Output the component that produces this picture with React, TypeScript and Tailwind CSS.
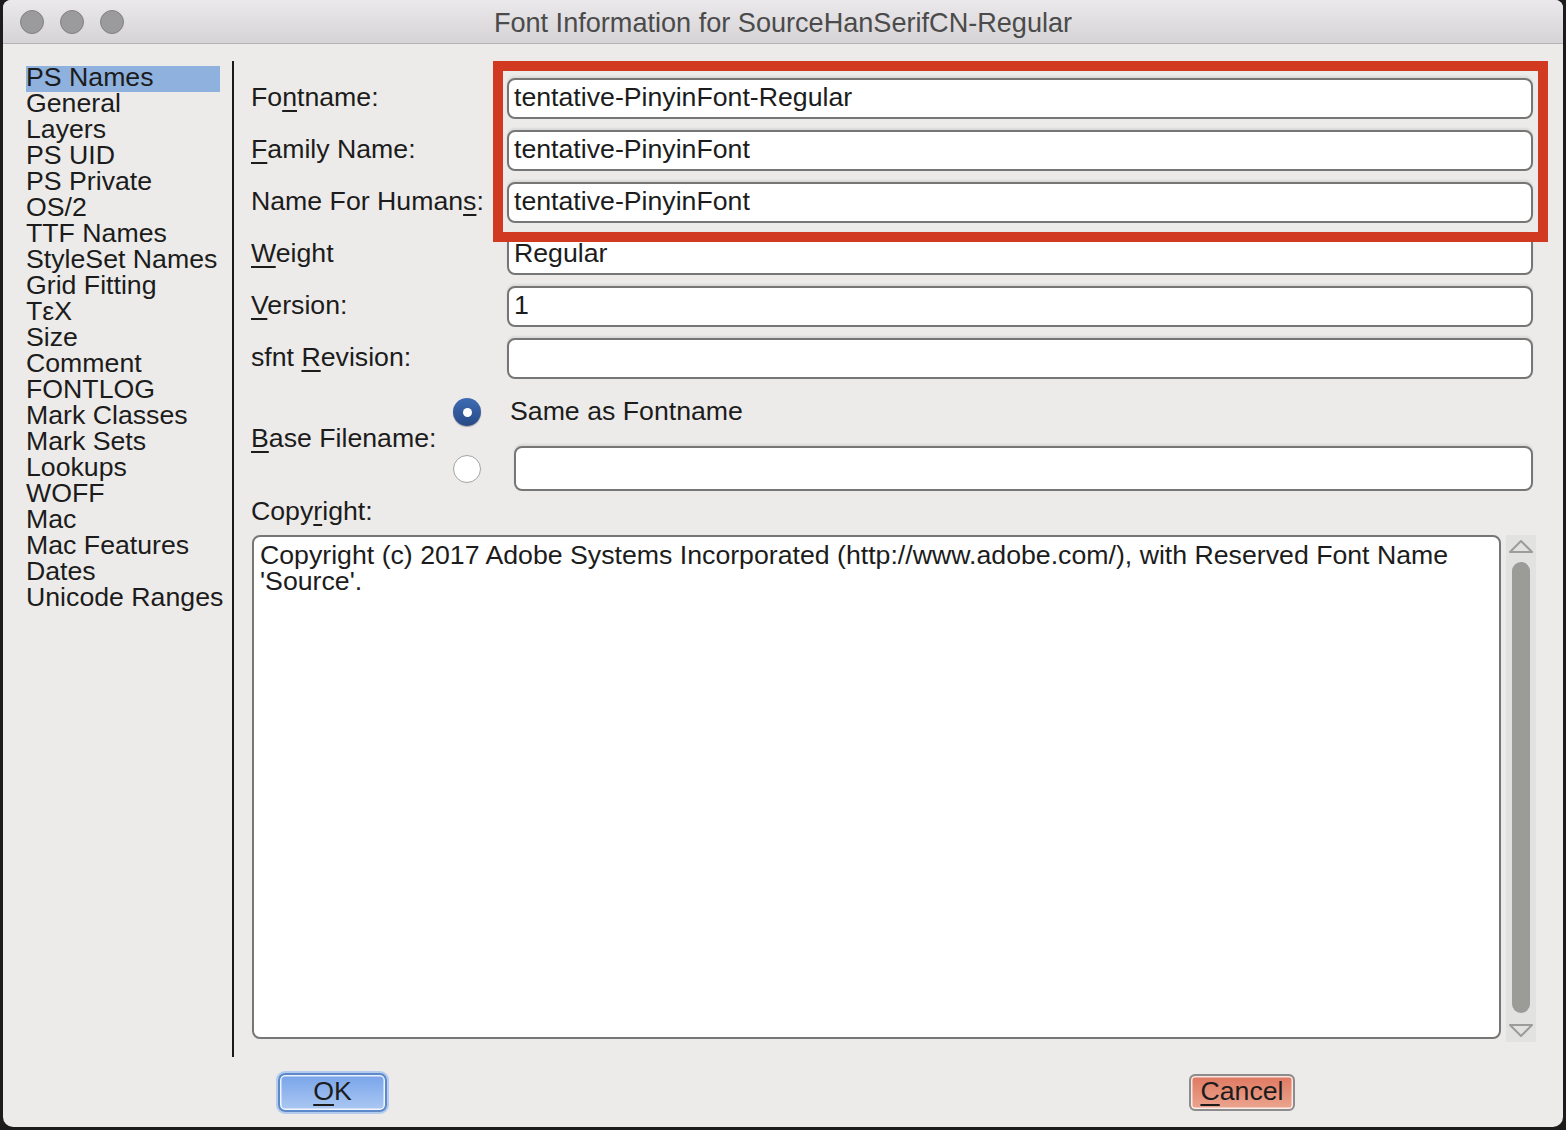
import React from 'react'

type Mnemonic = [string, string, string]

const sections = [
  'PS Names',
  'General',
  'Layers',
  'PS UID',
  'PS Private',
  'OS/2',
  'TTF Names',
  'StyleSet Names',
  'Grid Fitting',
  'TεX',
  'Size',
  'Comment',
  'FONTLOG',
  'Mark Classes',
  'Mark Sets',
  'Lookups',
  'WOFF',
  'Mac',
  'Mac Features',
  'Dates',
  'Unicode Ranges',
]

const fields: { label: Mnemonic; value: string }[] = [
  { label: ['Fo', 'n', 'tname:'], value: 'tentative-PinyinFont-Regular' },
  { label: ['', 'F', 'amily Name:'], value: 'tentative-PinyinFont' },
  { label: ['Name For Human', 's', ':'], value: 'tentative-PinyinFont' },
  { label: ['', 'W', 'eight'], value: 'Regular' },
  { label: ['', 'V', 'ersion:'], value: '1' },
  { label: ['sfnt ', 'R', 'evision:'], value: '' },
]

function Label({ parts }: { parts: Mnemonic }) {
  return (
    <span>
      {parts[0]}
      <span className="underline decoration-[2px] underline-offset-[4px]">{parts[1]}</span>
      {parts[2]}
    </span>
  )
}

function Field({ value, className = '' }: { value: string; className?: string }) {
  return (
    <div
      className={`flex items-center rounded-[8px] border-2 border-[#767676] bg-white pb-[4px] pl-[5px] shadow-[0_-2px_2px_rgba(0,0,0,0.08)] ${className}`}
    >
      {value}
    </div>
  )
}

function Radio({ checked }: { checked?: boolean }) {
  if (checked) {
    return (
      <div className="flex h-[28px] w-[28px] items-center justify-center rounded-full bg-gradient-to-b from-[#3d6cb4] to-[#284a86] shadow-[0_1px_1px_rgba(0,0,0,0.3)]">
        <div className="h-[9px] w-[9px] rounded-full bg-white" />
      </div>
    )
  }
  return <div className="h-[28px] w-[28px] rounded-full border-[1.5px] border-[#a3a3a3] bg-white" />
}

function Scrollbar() {
  return (
    <div className="flex h-[507px] w-[30px] flex-col items-center bg-[#e2e2e0] pt-[4px]">
      <svg width="26" height="15" viewBox="0 0 26 15">
        <path d="M2 13 L13 2 L24 13 Z" fill="none" stroke="#9c9c9a" strokeWidth="2" strokeLinejoin="round" />
      </svg>
      <div className="mt-[8px] h-[451px] w-[18px] rounded-full bg-[#9b9b98]" />
      <svg className="mt-[10px]" width="26" height="15" viewBox="0 0 26 15">
        <path d="M2 2 L13 13 L24 2 Z" fill="none" stroke="#9c9c9a" strokeWidth="2" strokeLinejoin="round" />
      </svg>
    </div>
  )
}

export default function App() {
  return (
    <div className="h-[1130px] w-[1566px] overflow-hidden bg-[#1c1c1c] pl-[3px] font-['Liberation_Sans',Arial,sans-serif] text-[26.7px] leading-[26px] text-[#1c1c1c]">
      <div className="relative h-[1127px] w-[1560px] overflow-hidden rounded-b-[10px] rounded-t-[8px] bg-[#ecebe9]">
        {/* title bar */}
        <div className="grid h-[44px] grid-cols-[1fr_auto_1fr] items-center border-b border-[#b4b3b4] bg-gradient-to-b from-[#ebe9eb] to-[#d5d3d5]">
          <div className="flex gap-[16px] pl-[17px]">
            <div className="h-[24px] w-[24px] rounded-full border border-[#828183] bg-[#9b9a9c]" />
            <div className="h-[24px] w-[24px] rounded-full border border-[#828183] bg-[#9b9a9c]" />
            <div className="h-[24px] w-[24px] rounded-full border border-[#828183] bg-[#9b9a9c]" />
          </div>
          <div className="pt-[3px] text-[27.1px] text-[#4b4b4b]">Font Information for SourceHanSerifCN-Regular</div>
          <div />
        </div>

        <div className="flex h-[1013px]">
          <ul className="w-[229px] pl-[23px] pt-[22px]">
            {sections.map((s, i) => (
              <li
                key={s}
                className={`h-[26px] w-[194px] whitespace-nowrap leading-[22px] ${i === 0 ? 'bg-[#8fb1dd]' : ''}`}
              >
                {s}
              </li>
            ))}
          </ul>
          <div className="mt-[17px] h-[996px] w-[2px] bg-[#1a1a1a]" />

          <div className="ml-[17px] flex-1 pr-[30px] pt-[34px]">
            <div className="flex flex-col gap-[11px]">
              {fields.map((f) => (
                <div key={f.value + f.label.join('')} className="flex h-[41px] items-center">
                  <div className="w-[256px] whitespace-nowrap pb-[4px]">
                    <Label parts={f.label} />
                  </div>
                  <Field value={f.value} className="h-[41px] flex-1" />
                </div>
              ))}
            </div>

            <div className="mt-[12px] flex">
              <div className="mb-[6px] w-[202px] self-center whitespace-nowrap">
                <Label parts={['', 'B', 'ase Filename:']} />
              </div>
              <div className="flex flex-1 flex-col">
                <div className="flex h-[42px] items-center">
                  <Radio checked />
                  <span className="mb-[2px] ml-[29px]">Same as Fontname</span>
                </div>
                <div className="mt-[13px] flex h-[45px] items-center">
                  <Radio />
                  <Field value="" className="ml-[33px] h-[45px] flex-1" />
                </div>
              </div>
            </div>

            <div className="mt-[7px]">
              <Label parts={['Copy', 'r', 'ight:']} />
            </div>

            <div className="-mr-[3px] ml-[1px] mt-[11px] flex items-start gap-[5px]">
              <div className="h-[504px] flex-1 rounded-[8px] border-2 border-[#767676] bg-white pl-[6px] pt-[5px]">
                Copyright (c) 2017 Adobe Systems Incorporated (http://www.adobe.com/), with Reserved Font Name
                <br />
                'Source'.
              </div>
              <Scrollbar />
            </div>
          </div>
        </div>

        <div className="flex items-center justify-between pl-[275px] pr-[268px] pt-[16px]">
          <button className="h-[39px] w-[109px] rounded-[7px] border-2 border-[#5d89cb] bg-gradient-to-b from-[#78a4ea] to-[#acc8f2] pb-[4px] shadow-[inset_0_0_0_1.5px_rgba(255,255,255,0.85),0_0_0_2px_#b3cbee]">
            <Label parts={['', 'O', 'K']} />
          </button>
          <button className="h-[37px] w-[106px] rounded-[6px] border-2 border-[#8c8c8c] bg-gradient-to-b from-[#df7862] to-[#eba58f] pb-[4px] shadow-[inset_0_0_0_1.5px_rgba(255,255,255,0.8)]">
            <Label parts={['', 'C', 'ancel']} />
          </button>
        </div>

        {/* red annotation box */}
        <div className="absolute left-[490px] top-[61px] h-[181px] w-[1055px] border-[10px] border-[#d13a21]" />
      </div>
    </div>
  )
}
